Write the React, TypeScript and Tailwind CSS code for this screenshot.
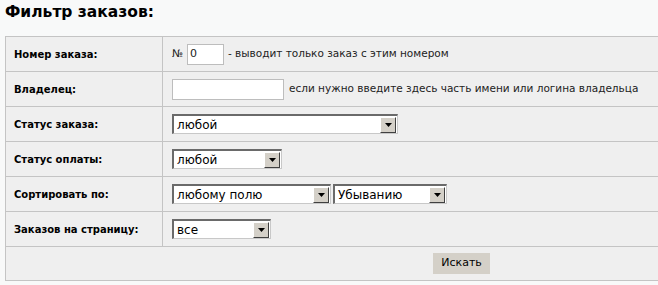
import React from "react";

function Arrow() {
  return (
    <div className="flex h-[16px] w-[16px] items-center justify-center border-t border-l border-b border-r border-t-white border-l-white border-b-[#404040] border-r-[#404040] bg-[#d4d0c8]">
      <svg width="7" height="4" viewBox="0 0 7 4">
        <polygon points="0,0 7,0 3.5,4" fill="#000" />
      </svg>
    </div>
  );
}

function Sel({ w, text }: { w: string; text: string }) {
  return (
    <div
      className={`${w} flex h-[20px] items-center border-t-2 border-l-2 border-b border-r border-t-[#6a6a6a] border-l-[#6a6a6a] border-b-[#c8c8c8] border-r-[#c8c8c8] bg-white`}
    >
      <div className="flex-1 pl-[3px] text-[12px] leading-none text-black">{text}</div>
      <div className="pr-[1px]">
        <Arrow />
      </div>
    </div>
  );
}

export default function App() {
  const font = { fontFamily: '"DejaVu Sans", Verdana, sans-serif' };
  const labelCls =
    "h-[35px] w-[157px] border border-[#c4c4c4] pl-[8px] align-middle text-[10px] font-bold text-black";
  const cellCls = "h-[35px] border border-[#c4c4c4] border-r-0 pl-[9px] align-middle text-[10.5px] text-[#222]";
  return (
    <div className="h-[285px] w-[658px] overflow-hidden bg-[#f8f9f9] pl-[5px]" style={font}>
      <h1 className="pt-[2px] pb-[14px] text-[15.5px] leading-[20px] font-bold text-black">Фильтр заказов:</h1>
      <table className="w-[653px] border-collapse bg-[#efefef]">
        <tbody>
          <tr>
            <td className={labelCls}>Номер заказа:</td>
            <td className={cellCls}>
              <div className="flex items-center">
                <span className="mr-[4px]">№</span>
                <div className="flex h-[21px] w-[37px] items-center border border-[#bdbdbd] bg-white pl-[2px] text-[11px]">0</div>
                <span className="ml-[4px]">- выводит только заказ с этим номером</span>
              </div>
            </td>
          </tr>
          <tr>
            <td className={labelCls}>Владелец:</td>
            <td className={cellCls}>
              <div className="flex items-center">
                <div className="h-[21px] w-[112px] border border-[#bdbdbd] bg-white" />
                <span className="ml-[5px]">если нужно введите здесь часть имени или логина владельца</span>
              </div>
            </td>
          </tr>
          <tr>
            <td className={labelCls}>Статус заказа:</td>
            <td className={cellCls}>
              <Sel w="w-[226px]" text="любой" />
            </td>
          </tr>
          <tr>
            <td className={labelCls}>Статус оплаты:</td>
            <td className={cellCls}>
              <Sel w="w-[110px]" text="любой" />
            </td>
          </tr>
          <tr>
            <td className={labelCls}>Сортировать по:</td>
            <td className={cellCls}>
              <div className="flex items-center gap-[2px]">
                <Sel w="w-[159px]" text="любому полю" />
                <Sel w="w-[114px]" text="Убыванию" />
              </div>
            </td>
          </tr>
          <tr>
            <td className={labelCls}>Заказов на страницу:</td>
            <td className={cellCls}>
              <Sel w="w-[99px]" text="все" />
            </td>
          </tr>
          <tr>
            <td colSpan={2} className="h-[34px] border border-[#c4c4c4] border-r-0 align-middle">
              <div className="flex pl-[427px]">
                <button className="h-[21px] w-[57px] bg-[#d4d0c8] text-[11px] text-black">Искать</button>
              </div>
            </td>
          </tr>
        </tbody>
      </table>
    </div>
  );
}
